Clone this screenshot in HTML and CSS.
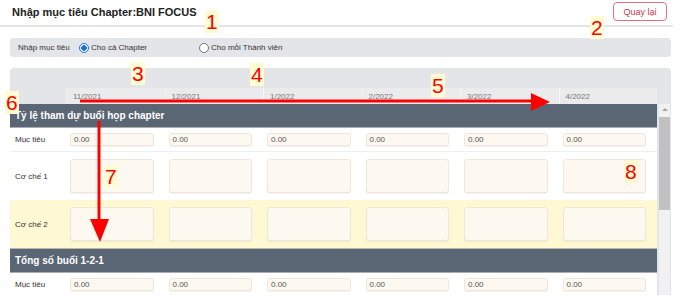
FILE: index.html
```html
<!DOCTYPE html>
<html lang="vi">
  <head>
    <meta charset="UTF-8" />
    <meta name="viewport" content="width=device-width, initial-scale=1.0" />
    <title>Nhập mục tiêu Chapter</title>
    <link rel="stylesheet" href="styles.css">
  </head>
  <body>
    <div class="page-header">
      <h1>Nhập mục tiêu Chapter:BNI FOCUS</h1>
      <button class="back-btn">Quay lại</button>
    </div>

    <div class="mode-bar">
      <span class="mode-label">Nhập mục tiêu</span>
      <label class="radio checked"><span class="dot"></span>Cho cả Chapter</label>
      <label class="radio"><span class="dot"></span>Cho mỗi Thành viên</label>
    </div>

    <div class="grid-wrap">
      <div class="grid-head">
        <div class="head-label"></div>
        <div class="month">11/2021</div>
        <div class="month">12/2021</div>
        <div class="month">1/2022</div>
        <div class="month">2/2022</div>
        <div class="month">3/2022</div>
        <div class="month">4/2022</div>
      </div>
      <div class="grid-scroll">
        <div class="grid-body">
          <div class="section-title">Tỷ lệ tham dự buổi họp chapter</div>
          <div class="row row-target">
            <div class="row-label">Mục tiêu</div>
            <div class="cell"><div class="field">0.00</div></div>
            <div class="cell"><div class="field">0.00</div></div>
            <div class="cell"><div class="field">0.00</div></div>
            <div class="cell"><div class="field">0.00</div></div>
            <div class="cell"><div class="field">0.00</div></div>
            <div class="cell"><div class="field">0.00</div></div>
          </div>
          <div class="row row-rule">
            <div class="row-label">Cơ chế 1</div>
            <div class="cell"><div class="area"></div></div>
            <div class="cell"><div class="area"></div></div>
            <div class="cell"><div class="area"></div></div>
            <div class="cell"><div class="area"></div></div>
            <div class="cell"><div class="area"></div></div>
            <div class="cell"><div class="area"></div></div>
          </div>
          <div class="row row-rule alt">
            <div class="row-label">Cơ chế 2</div>
            <div class="cell"><div class="area"></div></div>
            <div class="cell"><div class="area"></div></div>
            <div class="cell"><div class="area"></div></div>
            <div class="cell"><div class="area"></div></div>
            <div class="cell"><div class="area"></div></div>
            <div class="cell"><div class="area"></div></div>
          </div>
          <div class="section-title">Tổng số buổi 1-2-1</div>
          <div class="row row-target">
            <div class="row-label">Mục tiêu</div>
            <div class="cell"><div class="field">0.00</div></div>
            <div class="cell"><div class="field">0.00</div></div>
            <div class="cell"><div class="field">0.00</div></div>
            <div class="cell"><div class="field">0.00</div></div>
            <div class="cell"><div class="field">0.00</div></div>
            <div class="cell"><div class="field">0.00</div></div>
          </div>
        </div>
        <div class="scrollbar">
          <div class="scroll-up"></div>
          <div class="scroll-thumb"></div>
        </div>
      </div>
    </div>

    <!-- annotation overlay -->
    <svg class="arrows" width="682" height="307" viewBox="0 0 682 307">
      <line x1="80" y1="101" x2="534" y2="101" stroke="#f00" stroke-width="3" />
      <polygon points="531,93 550,102 531,111" fill="#f00" />
      <line x1="99" y1="121" x2="99" y2="222" stroke="#f00" stroke-width="3" />
      <polygon points="90,219 109,219 100,242" fill="#f00" />
    </svg>
    <span class="mark m1">1</span>
    <span class="mark m2">2</span>
    <span class="mark m3">3</span>
    <span class="mark m4">4</span>
    <span class="mark m5">5</span>
    <span class="mark m6">6</span>
    <span class="mark m7">7</span>
    <span class="mark m8">8</span>
  </body>
</html>
```

FILE: styles.css
```css
body {
  margin: 0;
  font-family: "Liberation Sans", Arial, sans-serif;
  color: #333;
  background: #fff;
  position: relative;
  width: 682px;
  height: 307px;
  overflow: hidden;
}
.page-header {
  display: flex;
  justify-content: space-between;
  align-items: flex-start;
  width: 673px;
  height: 25px;
  border-bottom: 2px solid #e4e4e6;
}
.page-header h1 {
  margin: 6px 0 0 12px;
  font-size: 11px;
  font-weight: bold;
  color: #222;
}
.back-btn {
  margin: 2px 6px 0 0;
  width: 54px;
  height: 19px;
  padding: 0;
  background: #fff;
  border: 1px solid #e2707e;
  border-radius: 4px;
  color: #c93a4d;
  font-family: inherit;
  font-size: 9px;
  cursor: pointer;
}
.mode-bar {
  display: flex;
  align-items: center;
  margin: 11px 0 0 10px;
  width: 661px;
  height: 19px;
  background: #e4e5e9;
  border-radius: 4px;
  font-size: 8px;
  color: #333;
}
.mode-label {
  margin-left: 8px;
  width: 61px;
}
.radio {
  display: flex;
  align-items: center;
  gap: 2px;
  width: 120px;
}
.radio .dot {
  box-sizing: border-box;
  width: 10px;
  height: 10px;
  border: 1px solid #767676;
  border-radius: 50%;
  background: #fff;
}
.radio.checked .dot {
  border: 1px solid #1a73e8;
  background: radial-gradient(circle, #1a73e8 0 2.6px, #fff 3px);
}
.grid-wrap {
  margin: 11px 0 0 10px;
  width: 661px;
  padding-top: 20px;
  background: #e4e5e9;
  border-radius: 4px 4px 0 0;
}
.grid-head {
  display: grid;
  grid-template-columns: 56px repeat(6, 1fr);
  width: 647px;
  height: 16px;
}
.month {
  padding: 4px 0 0 6px;
  background: #ebebed;
  border-left: 1px solid #f3f3f4;
  font-size: 8px;
  color: #777;
}
.grid-scroll {
  display: flex;
  height: 191px;
}
.grid-body {
  width: 647px;
  overflow: hidden;
  background: #fff;
}
.section-title {
  height: 23px;
  line-height: 24px;
  padding-left: 5px;
  background: #5b6675;
  border-bottom: 1px solid #a9acb2;
  color: #fff;
  font-size: 10px;
  font-weight: bold;
}
.row {
  display: grid;
  grid-template-columns: 56px repeat(6, 1fr);
  align-items: center;
}
.row-target {
  height: 23px;
  border-bottom: 1px solid #eee;
}
.row-rule {
  height: 48px;
}
.row-rule.alt {
  background: #fef8d3;
  border-bottom: 1px solid #b8b6ad;
}
.row-label {
  padding-left: 5px;
  font-size: 8px;
  color: #333;
}
.cell {
  padding: 0 11px 0 4px;
}
.field,
.area {
  box-sizing: border-box;
  background: #fdf9f1;
  border: 1px solid #eee7da;
  border-radius: 3px;
  box-shadow: 0 1px 1px rgba(0, 0, 0, 0.06);
}
.field {
  height: 13px;
  padding-left: 3px;
  font-size: 8px;
  line-height: 11px;
  color: #555;
}
.area {
  height: 34px;
}
.scrollbar {
  position: relative;
  margin-left: 2px;
  width: 11px;
  background: #f1f1f1;
}
.scroll-up {
  margin: 4px auto 0;
  width: 0;
  height: 0;
  border-left: 3px solid transparent;
  border-right: 3px solid transparent;
  border-bottom: 3px solid #a3a3a3;
}
.scroll-thumb {
  margin: 6px 0 0 0;
  height: 93px;
  background: #c1c1c1;
}

/* annotations */
.arrows {
  position: absolute;
  top: 0;
  left: 0;
  pointer-events: none;
}
.mark {
  position: absolute;
  padding: 0 1px;
  background: #fffbd2;
  color: #f00;
  font-size: 21px;
  line-height: 23px;
}
.m1 { left: 205px; top: 10px; }
.m2 { left: 590px; top: 16px; }
.m3 { left: 131px; top: 62px; }
.m4 { left: 250px; top: 63px; }
.m5 { left: 431px; top: 74px; }
.m6 { left: 5px; top: 91px; }
.m7 { left: 104px; top: 165px; }
.m8 { left: 624px; top: 160px; }
```
